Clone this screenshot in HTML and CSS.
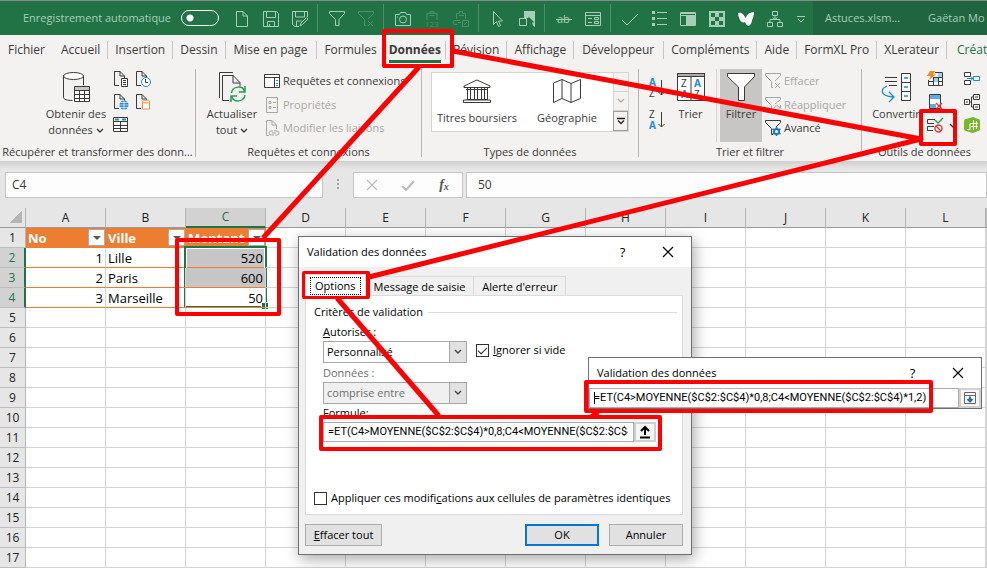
FILE: index.html
```html
<!DOCTYPE html>
<html lang="fr">
<head>
    <meta charset="UTF-8">
    <meta name="viewport" content="width=device-width, initial-scale=1.0">
    <title>Astuces.xlsm - Excel</title>
    <link rel="stylesheet" href="styles.css">
</head>
<body>
    <svg class="defs" aria-hidden="true">
        <symbol id="doc" viewBox="0 0 16 16"><path d="M1.500 14.500V.5H7l4.500 4.500V7M7 .5V5h4.500M1.500 14.500H6" fill="none" stroke="#3b3a39"/></symbol>
        <symbol id="funnel" viewBox="0 0 16 16"><path d="M.5 .5h15v2L10 8.500v6H6.500v-6L.5 2.500z" fill="none" stroke="currentColor"/></symbol>
        <symbol id="chevron" viewBox="0 0 8 6"><path d="M1 1l3 3 3-3" fill="none" stroke="currentColor" stroke-width="1.400"/></symbol>
        <symbol id="close" viewBox="0 0 12 12"><path d="M1 1l10 10M11 1L1 11" fill="none" stroke="currentColor" stroke-width="1.200"/></symbol>
    </svg>

    <header class="titlebar">
        <label class="autosave" for="autosave">Enregistrement automatique</label>
        <input type="checkbox" id="autosave" class="toggle">
        <div class="quick">
            <button aria-label="Nouveau"><svg viewBox="0 0 16 16"><path d="M2.500 .5H9l4.500 4.500v10.500h-11zM9 .5V5h4.500"/></svg></button>
            <button aria-label="Enregistrer"><svg viewBox="0 0 16 16"><path d="M.5 .5h13l2 2v13H.5zM3.500 .5v6h9v-6M4.500 15.500v-5h7v5M6.500 13v2.500"/></svg></button>
            <button aria-label="Enregistrer sous"><svg viewBox="0 0 16 16"><path d="M7 15.500H3l-2.500-2V.5h15V6M3.500 .5v5.500h9v-5.500M4.500 15v-5h5M8 15l1-3 5.500-5.500 1.500 1.500-5.500 5.500z"/></svg></button>
            <span class="qsep"></span>
            <button aria-label="Filtrer"><svg><use href="#funnel"/></svg></button>
            <button aria-label="Effacer le filtre" class="off"><svg viewBox="0 0 16 16"><path d="M.5 .5h15v2L10 8M6.500 14.500V8.500L.5 2.500v-2M6.500 14.500H8M10 10l5 5M15 10l-5 5"/></svg></button>
            <span class="qsep"></span>
            <button aria-label="Appareil photo"><svg viewBox="0 0 16 16"><path d="M.5 3.500h4l1-2h5l1 2h4v11H.5z"/><circle cx="8" cy="8.500" r="3.500"/><path d="M2 6h1"/></svg></button>
            <button aria-label="Coller les valeurs" class="off"><svg viewBox="0 0 16 16"><path d="M3 9V2.500h3v-2h4v2h3V9M5.500 4.500h5M6 2.500h4"/><text x="1" y="16">123</text></svg></button>
            <button aria-label="Coller avec liaison" class="off"><svg viewBox="0 0 16 16"><path d="M3.500 8V2.500h3v-2h3v2h3V8M6 4.500h5M7 9.500H2a2 2 0 0 0 0 4h2M5 11.500h3M9.500 9.500h6v6h-6zM11 14l3-3"/></svg></button>
            <span class="qsep"></span>
            <button aria-label="Sélectionner"><svg viewBox="0 0 16 16"><path d="M3.500 .5v13l3-3 2 5 2-1-2-4.500h4z"/></svg></button>
            <button aria-label="Sélectionner les objets"><svg viewBox="0 0 16 16"><path d="M.5 7.500h7v7h-7z"/><path class="solid" d="M5 0h11v16l-6-4V7H5z"/><path class="cut" d="M9.500 5.500v9l2-2 1.500 3 1-1-1-3h2.500z"/></svg></button>
            <span class="qsep"></span>
            <button aria-label="Barré"><svg viewBox="0 0 16 16"><text class="ab" x="1" y="12">ab</text><path d="M0 8.500h16"/></svg></button>
            <button aria-label="Formulaire"><svg viewBox="0 0 16 16"><path d="M.5 1.500h15v13H.5zM.5 4.500h15M3 7.500h4M3 11.500h4M9.500 6.500h4v2h-4zM9.500 10.500h4v2h-4z"/></svg></button>
            <span class="qsep"></span>
            <button aria-label="Valider"><svg viewBox="0 0 16 16"><path d="M0 9l5 5L16 3"/></svg></button>
            <button aria-label="Liste"><svg viewBox="0 0 16 16"><path class="solid" d="M1 0h3v3H1zM1 6h3v3H1zM1 12h3v3H1z"/><path d="M6 1.500h10M6 7.500h10M6 13.500h10"/></svg></button>
            <button aria-label="Volets"><svg viewBox="0 0 16 16"><path d="M.5 1.500h15v13H.5zM.5 4.500h15"/><path class="solid" d="M6 4h9v10H6zM1 2h14v1H1z"/></svg></button>
            <button aria-label="Damier"><svg viewBox="0 0 16 16"><path class="solid" d="M0 0h16v16H0z"/><path class="cut" d="M2 2h4v4H2zM10 2h4v4h-4zM6 6h4v4H6zM2 10h4v4H2zM10 10h4v4h-4z"/></svg></button>
            <button aria-label="Papillon"><svg viewBox="0 0 16 16"><path class="wing" d="M0 2c4-1 6 2 7.500 5C9 3 12 1 16 1c0 4-1 6-2 8 0 3-2 5-3 6-2 0-3-2-4-4-2 1-4 0-5-2C1 7 0 4 0 2z"/></svg></button>
            <button aria-label="Organigramme"><svg viewBox="0 0 16 16"><path d="M5.500 .5h5v4h-5zM.5 11.500h5v4h-5zM10.500 11.500h5v4h-5zM8 4.500v4M3 11V8.500h10V11M5.500 6.500l2.500 2 2.500-2"/></svg></button>
            <button aria-label="Personnaliser" class="more"><svg viewBox="0 0 8 8"><path d="M0 1.500h8M1 4l3 3 3-3"/></svg></button>
        </div>
        <div class="docinfo"><span>Astuces.xlsm...</span><span>Gaëtan Mo</span></div>
    </header>

    <nav class="tabs">
        <a href="#" class="file">Fichier</a>
        <a href="#">Accueil</a>
        <a href="#">Insertion</a>
        <a href="#">Dessin</a>
        <a href="#" class="long">Mise en page</a>
        <a href="#">Formules</a>
        <a href="#" class="active">Données</a>
        <a href="#">Révision</a>
        <a href="#">Affichage</a>
        <a href="#" class="long">Développeur</a>
        <a href="#">Compléments</a>
        <a href="#">Aide</a>
        <a href="#">FormXL Pro</a>
        <a href="#">XLerateur</a>
        <a href="#" class="context">Créat</a>
    </nav>

    <div class="ribbon">
        <section class="group get">
            <div class="tools">
                <button class="big">
                    <svg viewBox="0 0 28 32"><path d="M1.500 4.500v22c0 2 4 3 9 3M21.500 4.500V14" fill="none" stroke="#3b3a39"/><ellipse cx="11.500" cy="5" rx="10" ry="3.500" fill="#fff" stroke="#3b3a39"/><path d="M12.500 15.500h15v15h-15z" fill="#fff" stroke="#3b3a39"/><path d="M13 16h14v3H13z" fill="#c8c6c4"/><path d="M12.500 19.500h15M12.500 23.500h15M12.500 27.500h15M17.500 19v12M22.500 19v12" fill="none" stroke="#3b3a39"/></svg>
                    <span>Obtenir des<br>données <svg class="caret"><use href="#chevron"/></svg></span>
                </button>
                <div class="icons">
                    <button aria-label="Fichier texte"><svg viewBox="0 0 16 16"><use href="#doc"/><path d="M8.500 7.500h6v8h-6zM10 9.500h3M10 11.500h3M10 13.500h3" fill="#fff" stroke="#3b3a39"/></svg></button>
                    <button aria-label="Sources récentes"><svg viewBox="0 0 16 16"><use href="#doc"/><circle cx="11" cy="11" r="4.500" fill="#fff" stroke="#1e8bcd"/><path d="M10.500 8v3.500H13" fill="none" stroke="#3b3a39"/></svg></button>
                    <button aria-label="À partir du web"><svg viewBox="0 0 16 16"><use href="#doc"/><circle cx="11" cy="11" r="4.500" fill="#1e8bcd"/><path d="M6 11h10M11 6v10M7 8.500h8M7 13.500h8" fill="none" stroke="#fff" stroke-width=".7"/></svg></button>
                    <button aria-label="Connexions existantes"><svg viewBox="0 0 16 16"><use href="#doc"/><path d="M7.500 7.500v7.500h7V7.500" fill="#fff" stroke="#f7893c"/><ellipse cx="11" cy="7.500" rx="3.500" ry="1.500" fill="#fff" stroke="#f7893c"/></svg></button>
                    <button aria-label="À partir d'un tableau"><svg viewBox="0 0 16 16"><path d="M.5 .5h14v14H.5zM.5 4.500h14M.5 8.500h14M.5 11.500h14M7.500 4v11" fill="#fff" stroke="#3b3a39"/><path d="M2 2.500h4M9 2.500h4" stroke="#1e8bcd" stroke-width="2"/></svg></button>
                </div>
            </div>
            <h2>Récupérer et transformer des donn...</h2>
        </section>

        <section class="group queries">
            <div class="tools">
                <button class="big">
                    <svg viewBox="0 0 28 32"><path d="M1.500 27V1.500H15M4.500 29.500V4.500H15l7 7V15M15 4v8h7M4.500 29.500H11" fill="none" stroke="#3b3a39"/><path d="M13.500 22c1-7 11-8 13-2M27 15v6h-6M27 24c-1 7-11 8-13 2M13 31v-6h6" fill="none" stroke="#22a04d" stroke-width="1.500"/></svg>
                    <span>Actualiser<br>tout <svg class="caret"><use href="#chevron"/></svg></span>
                </button>
                <div class="list">
                    <button><svg viewBox="0 0 16 16"><path d="M.5 1.500h15v13H.5zM.5 4.500h15M10.500 4.500v10" fill="#fff" stroke="#3b3a39"/><path d="M12 7.500h2M12 10.500h2M12 12.500h2" stroke="#1e8bcd"/></svg>Requêtes et connexions</button>
                    <button disabled><svg viewBox="0 0 16 16"><path d="M2.500 .5h11v15h-11zM5 4.500h2v2H5zM5 9.500h2v2H5zM9 5.500h3M9 10.500h3" fill="none" stroke="#a8a6a4"/></svg>Propriétés</button>
                    <button disabled><svg viewBox="0 0 16 16"><path d="M2.500 15.500V.5H8l4.500 4.500v4M8 .5V5h4.500M2.500 15.500H5M9 11H7a2 2 0 0 0 0 4h3M11 15h2a2 2 0 0 0 0-4h-3M8 13h4" fill="none" stroke="#a8a6a4"/></svg>Modifier les liaisons</button>
                </div>
            </div>
            <h2>Requêtes et connexions</h2>
        </section>

        <section class="group types">
            <div class="tools">
                <div class="gallery">
                    <button><svg viewBox="0 0 28 28"><path d="M1 9.500V8L14 2l13 6v1.500zM3 11.500h22M3.500 21.500h21M.5 24.500h27v-2.500H.5zM4.500 10v12M7.500 10v12M11.500 10v12M14.500 10v12M18.500 10v12M21.500 10v12M24.500 10v12" fill="none" stroke="#3b3a39"/></svg>Titres boursiers</button>
                    <button><svg viewBox="0 0 28 28"><path d="M.5 5L9 1.500l9 4 9.500-4v19L18 24.500l-9-4-8.500 4zM9 1.500v19M18 5.500v19" fill="none" stroke="#3b3a39"/></svg>Géographie</button>
                    <div class="scroll">
                        <button disabled aria-label="Haut"><svg class="up"><use href="#chevron"/></svg></button>
                        <button disabled aria-label="Bas"><svg><use href="#chevron"/></svg></button>
                        <button aria-label="Autres"><svg viewBox="0 0 8 6"><path d="M0 .5h8M1 2.500l3 3 3-3" fill="none" stroke="#222" stroke-width="1.300"/></svg></button>
                    </div>
                </div>
            </div>
            <h2>Types de données</h2>
        </section>

        <section class="group sort">
            <div class="tools">
                <div class="az">
                    <button aria-label="Trier de A à Z"><svg viewBox="0 0 16 20"><text x="0" y="8" class="blue">A</text><text x="0" y="19">Z</text><path d="M12.500 2v15M9.500 14l3 3 3-3"/></svg></button>
                    <button aria-label="Trier de Z à A"><svg viewBox="0 0 16 20"><text x="0" y="8">Z</text><text x="0" y="19" class="blue">A</text><path d="M12.500 2v15M9.500 14l3 3 3-3"/></svg></button>
                </div>
                <button class="big sorter">
                    <svg viewBox="0 0 28 32"><path d="M.5 2.500h27v27H.5zM14 5v24" fill="#fff" stroke="#3b3a39"/><path d="M.5 2.500h27v3H.5z" fill="#b0aeac" stroke="#3b3a39"/><text x="4" y="16">Z</text><text x="4" y="27" class="blue">A</text><text x="17" y="16" class="blue">A</text><text x="17" y="27">Z</text></svg>
                    <span>Trier</span>
                </button>
                <button class="big filter">
                    <svg viewBox="0 0 28 32"><path d="M.5 2.500h27v3L17.500 16v13.500h-6V16L.5 5.500z" fill="#fff" stroke="#3b3a39"/></svg>
                    <span>Filtrer</span>
                </button>
                <div class="list">
                    <button disabled><svg viewBox="0 0 16 16"><path d="M.5 .5h15v2L10 8M6.500 14.500V8.500L.5 2.500v-2M6.500 14.500H8M10 10l5 5M15 10l-5 5" fill="none" stroke="#a8a6a4"/></svg>Effacer</button>
                    <button disabled><svg viewBox="0 0 16 16"><path d="M.5 .5h15v2L10 7M6.500 14.500V8.500L.5 2.500v-2M6.500 14.500H8M9 11c1-3 5-3 6 0M15.500 8v3h-3M15 13c-1 3-5 3-6 1" fill="none" stroke="#a8a6a4"/></svg>Réappliquer</button>
                    <button><svg viewBox="0 0 16 16"><path d="M.5 .5h15v2L11 7M6.500 14.500V8.500L.5 2.500v-2M6.500 14.500H8" fill="none" stroke="#3b3a39"/><circle cx="11.500" cy="11.500" r="2.500" fill="#fff" stroke="#1e78c2" stroke-width="2"/><path d="M11.500 7v2M11.500 14v2M7.500 9l2 1M13.500 13l2 1M15.500 9l-2 1M9.500 13l-2 1" stroke="#1e78c2" stroke-width="1.500"/></svg>Avancé</button>
                </div>
            </div>
            <h2>Trier et filtrer</h2>
        </section>

        <section class="group data">
            <div class="tools">
                <button class="big">
                    <svg class="wide" viewBox="0 0 32 32"><path d="M5 6.500h12M5 10.500h12M9 14.500h8" stroke="#3b3a39"/><path d="M21.500 2.500h9v27h-9zM21.500 11.500h9M21.500 20.500h9" fill="#fff" stroke="#3b3a39"/><path d="M24 7h4M24 16h4M24 25h4M7 15c-7 3-7 10 6 11M9 21l5 5-5 5" fill="none" stroke="#1e8bcd" stroke-width="1.300"/></svg>
                    <span>Convertir</span>
                </button>
                <div class="icons">
                    <button aria-label="Remplissage instantané"><svg viewBox="0 0 16 16"><path d="M1.500 9v5.500h14V1.500H8M1 10.500h14M6 6.500h9M6.500 6v8M11.500 2v12" fill="none" stroke="#3b3a39"/><path d="M7 7h4v4H7zM11 2h4v4h-4z" fill="#9fd0f1"/><path d="M3 0h5L6 3.500h3L2 9l1.500-4H0z" fill="#f08a24"/></svg></button>
                    <button aria-label="Consolider"><svg viewBox="0 0 16 16"><path d="M.5 1.500h6v4h-6zM.5 9.500h6v4h-6z" fill="#fff" stroke="#3b3a39"/><path d="M9.500 5.500h6v4h-6zM3 7.500h6M6 5l3 2.500L6 10" fill="none" stroke="#1e8bcd"/></svg></button>
                    <button aria-label="Supprimer les doublons"><svg viewBox="0 0 16 16"><path d="M2.500 .5h11v14h-11z" fill="#fff" stroke="#3b3a39"/><path d="M3 1h10v4H3zM3 10h6v4H3z" fill="#5aaee6"/><path d="M9 9l6 6M15 9l-6 6" stroke="#e03c3c" stroke-width="1.500"/></svg></button>
                    <button aria-label="Relations"><svg viewBox="0 0 16 16"><path d="M.5 5.500h5v5h-5zM9.500 .5h6v5h-6zM9.500 10.500h6v5h-6zM5.500 8h2M7.500 3v10M7.500 3h2M7.500 13h2M2 8h2M11 3h3M11 13h3" fill="none" stroke="#3b3a39"/></svg></button>
                    <button aria-label="Validation des données" class="split"><svg viewBox="0 0 16 16"><path d="M8 2.500H.5v4H7M7 9.500H.5v4H6" fill="none" stroke="#3b3a39"/><path d="M8 3l3 3 5-5" fill="none" stroke="#22a04d" stroke-width="1.400"/><circle cx="11.500" cy="11.500" r="3.500" fill="#fff" stroke="#e03c3c" stroke-width="1.400"/><path d="M9 9l5 5" stroke="#e03c3c" stroke-width="1.400"/></svg><svg class="caret"><use href="#chevron"/></svg></button>
                    <button aria-label="Modèle de données"><svg viewBox="0 0 16 16"><path d="M0 4q0-2 2-2l7-2 5 2q2 0 2 2v8q0 2-2 2l-5 2-7-2q-2 0-2-2z" fill="#77b82a"/><path d="M3 12.500h3V6.500h3M9.500 3v10M12.500 4v8M7 9.500h7M10 6.500h4" fill="none" stroke="#fff"/></svg></button>
                </div>
            </div>
            <h2>Outils de données</h2>
        </section>
    </div>

    <div class="formulabar">
        <input class="namebox" type="text" value="C4" aria-label="Zone Nom">
        <span class="dots"></span>
        <div class="fx">
            <button aria-label="Annuler"><svg><use href="#close"/></svg></button>
            <button aria-label="Entrer"><svg viewBox="0 0 12 12"><path d="M0 7l4 4 8-9" fill="none" stroke="currentColor" stroke-width="2"/></svg></button>
            <button aria-label="Insérer une fonction" class="fn"><i>f</i><small>x</small></button>
        </div>
        <input class="formula" type="text" value="50" aria-label="Barre de formule">
    </div>

    <main class="sheet">
        <table class="grid">
            <thead><tr id="letters"><th class="corner"></th></tr></thead>
            <tbody id="rows"></tbody>
        </table>
    </main>

    <div class="dialog main-dialog" role="dialog" aria-labelledby="dlg1">
        <div class="caption">
            <span id="dlg1">Validation des données</span>
            <button aria-label="Aide">?</button>
            <button aria-label="Fermer"><svg><use href="#close"/></svg></button>
        </div>
        <div class="dialog-body">
            <div class="dialog-tabs">
                <button class="current"><span>Options</span></button>
                <button>Message de saisie</button>
                <button>Alerte d'erreur</button>
            </div>
            <div class="panel">
                <div class="legend">Critères de validation</div>
                <div class="fields">
                    <label for="allow"><u>A</u>utoriser :</label>
                    <div class="row">
                        <div class="combo">
                            <select id="allow"><option>Personnalisé</option></select>
                            <svg><use href="#chevron"/></svg>
                        </div>
                        <label class="check"><input type="checkbox" checked><span><u>I</u>gnorer si vide</span></label>
                    </div>
                    <label for="op" class="dim">Données :</label>
                    <div class="combo">
                        <select id="op" disabled><option>comprise entre</option></select>
                        <svg><use href="#chevron"/></svg>
                    </div>
                    <label for="f1"><u>F</u>ormule:</label>
                    <div class="ref">
                        <input id="f1" type="text" value="=ET(C4&gt;MOYENNE($C$2:$C$4)*0,8;C4&lt;MOYENNE($C$2:$C$4)*1,2)">
                        <button aria-label="Réduire"><svg viewBox="0 0 12 12"><path d="M6 1v8M2 5l4-4 4 4M1 11.500h10" fill="none" stroke="#000" stroke-width="2"/></svg></button>
                    </div>
                </div>
                <label class="check apply"><input type="checkbox"><span>Appliquer ces modifi<u>c</u>ations aux cellules de paramètres identiques</span></label>
            </div>
            <div class="actions">
                <button class="clear"><u>E</u>ffacer tout</button>
                <button class="ok">OK</button>
                <button>Annuler</button>
            </div>
        </div>
    </div>

    <div class="dialog mini-dialog" role="dialog" aria-labelledby="dlg2">
        <div class="caption">
            <span id="dlg2">Validation des données</span>
            <button aria-label="Aide">?</button>
            <button aria-label="Fermer"><svg><use href="#close"/></svg></button>
        </div>
        <div class="ref">
            <input type="text" class="editing" aria-label="Formule" value="=ET(C4&gt;MOYENNE($C$2:$C$4)*0,8;C4&lt;MOYENNE($C$2:$C$4)*1,2)">
            <button aria-label="Agrandir"><svg viewBox="0 0 12 12"><path d="M.5 .5h11v11H.5zM.5 3.500h11" fill="#fff" stroke="#666"/><path d="M6 4.500V9M3.500 7L6 9.500 8.500 7" fill="none" stroke="#2672b8" stroke-width="2"/></svg></button>
        </div>
    </div>

    <svg class="marks" viewBox="0 0 987 568" aria-hidden="true">
        <path class="box" d="M384 31h68v35h-68zM921 111h34v33h-34zM177 240h102v74H177zM304 273h64v24h-64zM321 417h339v32H321zM586 382h345v29H586z"/>
        <path class="line" d="M419 67L263 238M453 51L921 139L369 277M337 298L439 416M598 412L591 417"/>
    </svg>

    <script>
        const letters = 'ABCDEFGHIJKLM'.split('');
        const data = {
            1: ['No', 'Ville', 'Montant'],
            2: [1, 'Lille', 520],
            3: [2, 'Paris', 600],
            4: [3, 'Marseille', 50]
        };
        const head = document.getElementById('letters');
        letters.forEach(l => {
            head.innerHTML += `<th class="${l === 'C' ? 'on' : ''}">${l === 'M' ? '' : l}</th>`;
        });

        let html = '';
        for (let r = 1; r <= 17; r++) {
            html += `<tr><th class="${r > 1 && r < 5 ? 'on' : ''}">${r}</th>`;
            letters.forEach((l, c) => {
                const value = data[r] ? data[r][c] : undefined;
                if (value === undefined) {
                    html += '<td></td>';
                } else if (r === 1) {
                    html += `<td class="head"><div>${value}<button aria-label="Filtrer ${value}"></button></div></td>`;
                } else {
                    const cls = (c === 1 ? 'text' : 'num') + (c === 2 && r < 4 ? ' picked' : '');
                    const frame = c === 2 && r === 2 ? '<span class="selection"></span>' : '';
                    html += `<td class="cell ${cls}">${value}${frame}</td>`;
                }
            });
            html += '</tr>';
        }
        document.getElementById('rows').innerHTML = html;
    </script>
</body>
</html>
```
FILE: styles.css
```css
:root {
    --green: #217346;
    --ribbon: #f3f2f1;
    --ink: #3b3a39;
    --line: #d4d4d4;
    --orange: #ed7d31;
}
* {
    box-sizing: border-box;
}
body {
    margin: 0;
    position: relative;
    min-height: 100vh;
    overflow: hidden;
    font-family: "Open Sans", "Noto Sans", sans-serif;
    font-size: 11px;
    line-height: 16px;
    color: var(--ink);
    background: #fff;
}
button, input, select {
    font: inherit;
    color: inherit;
    margin: 0;
    padding: 0;
    border: 0;
    border-radius: 0;
    background: none;
}
button {
    display: flex;
    align-items: center;
    justify-content: center;
    white-space: nowrap;
}
svg {
    width: 16px;
    height: 16px;
    flex: none;
    overflow: visible;
}
.defs {
    display: none;
}

/* title bar */
.titlebar {
    display: flex;
    align-items: center;
    height: 35px;
    padding-left: 23px;
    border-top: 1px solid #888;
    background: var(--green);
    color: #a6cfb6;
    white-space: nowrap;
}
.autosave {
    width: 158px;
}
.toggle {
    appearance: none;
    flex: none;
    width: 38px;
    height: 16px;
    border: 1px solid #fff;
    border-radius: 8px;
    background: radial-gradient(circle at 8px 7px, #fff 3px, transparent 4px);
}
.quick {
    display: flex;
    padding: 2px 0 0 8px;
}
.quick button {
    width: 29px;
    height: 32px;
}
.quick svg {
    fill: none;
    stroke: currentColor;
}
.quick .off {
    color: #4c9069;
}
.quick .solid {
    fill: currentColor;
    stroke: none;
}
.quick .cut {
    fill: var(--green);
    stroke: none;
}
.quick .wing {
    fill: #fff;
    stroke: none;
}
.quick text {
    fill: currentColor;
    stroke: none;
    font-size: 8px;
}
.quick .ab {
    font-size: 11px;
}
.quick .more {
    width: 24px;
}
.quick .more svg {
    width: 8px;
    height: 8px;
}
.qsep {
    width: 1px;
    height: 28px;
    margin: 1px 4px 0 3px;
    background: #4d9069;
}
.docinfo {
    flex: 1;
    display: flex;
    align-items: center;
    align-self: stretch;
    gap: 28px;
    padding-left: 12px;
    overflow: hidden;
    background: #1f6640;
}

/* tabs */
.tabs {
    display: flex;
    height: 31px;
    padding-top: 6px;
    background: var(--ribbon);
    overflow: hidden;
}
.tabs a {
    flex: none;
    height: 18px;
    padding: 0 7px;
    border-left: 1px solid #c8c6c4;
    color: var(--ink);
    font-size: 12px;
    line-height: 18px;
    text-decoration: none;
}
.tabs .file {
    padding: 0 8px;
    border-left: 0;
}
.tabs .file + a {
    border-left: 0;
    padding-left: 8px;
}
.tabs .long {
    padding: 0 9px 0 8px;
}
.tabs .active {
    height: 22px;
    font-weight: bold;
    padding: 0 4px;
    border-left-color: transparent;
}
.tabs .active::after {
    content: "";
    display: block;
    height: 3px;
    margin-top: 1px;
    background: var(--green);
}
.tabs .context {
    padding-left: 10px;
    color: var(--green);
}

/* ribbon */
.ribbon {
    display: flex;
    height: 95px;
    padding-top: 2px;
    background: var(--ribbon);
    overflow: hidden;
}
.group {
    flex: none;
    display: flex;
    flex-direction: column;
    margin: 1px 0 4px;
    border-right: 1px solid #b8b6b4;
}
.group h2 {
    margin: auto 0 0;
    font-size: 11px;
    font-weight: normal;
    line-height: 10px;
    text-align: center;
    white-space: nowrap;
}
.tools {
    display: flex;
    height: 73px;
}
.get { width: 196px; }
.queries { width: 226px; }
.types { width: 217px; }
.sort { width: 223px; }
.data { flex: 1; border-right: 0; }

.big {
    flex-direction: column;
    justify-content: flex-start;
    padding-top: 2px;
}
.big > svg {
    width: 28px;
    height: 32px;
    margin-bottom: 3px;
}
.big .wide {
    width: 32px;
}
.caret {
    width: 8px;
    height: 6px;
}
.get .big { width: 66px; margin-left: 43px; }
.queries .big { width: 60px; margin-left: 6px; }
.data .big { width: 54px; margin-left: 7px; }
.icons {
    display: grid;
    grid-template-columns: 22px 22px;
    grid-auto-rows: 23px;
    padding: 2px 0 0 4px;
}
.icons button {
    align-items: flex-start;
    justify-content: flex-start;
}
.icons .split {
    gap: 6px;
}
.split .caret {
    margin-top: 6px;
}
.data .icons {
    grid-template-columns: 37px 22px;
}
.list {
    display: flex;
    flex-direction: column;
    align-items: flex-start;
    padding-top: 2px;
}
.queries .list {
    padding-left: 2px;
}
.list button {
    height: 24px;
    gap: 3px;
    padding-bottom: 4px;
}
.list button:disabled {
    color: #a8a6a4;
}
.gallery {
    display: flex;
    height: 60px;
    margin: 3px 0 0 9px;
    border: 1px solid var(--line);
    background: #fff;
}
.gallery > button {
    flex-direction: column;
    width: 90px;
}
.gallery > button > svg {
    width: 28px;
    height: 28px;
    margin-bottom: 4px;
}
.scroll {
    width: 15px;
    margin-left: 1px;
}
.scroll button {
    width: 15px;
    height: 19px;
    border-left: 1px solid var(--line);
    border-bottom: 1px solid var(--line);
    color: #b0aeac;
    background: var(--ribbon);
}
.scroll button:last-child {
    height: 20px;
    border: 1px solid #a19f9d;
}
.scroll svg {
    width: 8px;
    height: 6px;
}
.up {
    transform: rotate(180deg);
}
.sort text {
    font-size: 10px;
    fill: var(--ink);
}
.sort .blue {
    fill: #1e8bcd;
    font-weight: bold;
}
.az {
    padding: 9px 0 0 10px;
}
.az svg {
    width: 16px;
    height: 20px;
}
.az button {
    margin-bottom: 12px;
}
.az path {
    fill: none;
    stroke: var(--ink);
}
.sorter {
    width: 52px;
    margin-right: 3px;
    border-right: 1px solid var(--line);
}
.filter {
    width: 42px;
    background: #c8c6c4;
}
.sort .list {
    padding-left: 3px;
}

/* formula bar */
.formulabar {
    display: flex;
    align-items: center;
    height: 47px;
    padding-left: 5px;
    background: linear-gradient(#cfcfcf, #e6e6e6 8px);
    font-size: 12px;
}
.formulabar input {
    height: 26px;
    border: 1px solid #c6c6c6;
    background: #fdfdfd;
}
.namebox {
    width: 318px;
    padding-left: 6px;
}
.dots {
    width: 2px;
    height: 11px;
    margin: 0 14px;
    background: repeating-linear-gradient(#a6a6a6 0 2px, transparent 2px 4px);
}
.fx {
    display: flex;
    width: 110px;
    height: 26px;
    margin-right: 3px;
    border: 1px solid #c6c6c6;
    background: #fdfdfd;
    color: #bbb;
}
.fx button {
    width: 36px;
}
.fx svg {
    width: 12px;
    height: 12px;
}
.fx .fn {
    color: #555;
    font: bold 14px "Liberation Serif", serif;
}
.fn small {
    font-size: 10px;
    font-style: italic;
    padding-top: 3px;
}
.formula {
    flex: 1;
    min-width: 0;
    padding-left: 11px;
}

/* grid */
.grid {
    width: 100%;
    table-layout: fixed;
    border-spacing: 0;
    color: #000;
}
.grid th {
    width: 80px;
    height: 20px;
    padding: 0;
    border-right: 1px solid #b5b5b5;
    border-bottom: 1px solid #9b9b9b;
    background: #e6e6e6;
    color: #222;
    font-size: 12px;
    font-weight: normal;
    line-height: 18px;
}
.grid th:last-child {
    width: auto;
}
.grid .corner {
    width: 26px;
    background: linear-gradient(135deg, transparent 50%, #b5b5b5 50%) 10px 3px / 12px 12px no-repeat #e6e6e6;
}
.grid thead .on {
    background: #d2d2d2;
    border-bottom: 2px solid var(--green);
    color: var(--green);
}
.grid tbody th {
    width: 26px;
    border-bottom-color: #bdbdbd;
    font-size: 12px;
}
.grid tbody .on {
    background: #d2d2d2;
    border-right: 2px solid var(--green);
    color: var(--green);
}
.grid td {
    position: relative;
    height: 20px;
    padding: 0 2px;
    border-right: 1px solid var(--line);
    border-bottom: 1px solid var(--line);
    font-size: 13px;
    line-height: 18px;
}
.grid .cell {
    border-bottom-color: var(--orange);
}
.grid .num {
    text-align: right;
}
.grid .picked {
    background: #c6c6c6;
}
.grid .head {
    padding: 0 0 0 2px;
    border-color: var(--orange);
    background: var(--orange);
    color: #fff;
    font-weight: bold;
}
.head div {
    display: flex;
    justify-content: space-between;
    align-items: center;
    height: 19px;
}
.head button {
    width: 17px;
    height: 17px;
    border: 1px solid #ababab;
    background: #fff;
}
.head button::after {
    content: "";
    border: 4px solid transparent;
    border-top-color: #555;
    border-bottom: 0;
}
.selection {
    position: absolute;
    top: -2px;
    left: -2px;
    right: -2px;
    height: 62px;
    border: 2px solid var(--green);
    box-shadow: inset 0 0 0 1px #fff;
}
.selection::after {
    content: "";
    position: absolute;
    right: -3px;
    bottom: -3px;
    width: 6px;
    height: 6px;
    border: 1px solid #fff;
    border-width: 1px 0 0 1px;
    background: var(--green);
}

/* dialogs */
.dialog {
    position: absolute;
    width: 394px;
    border: 1px solid #6e6e6e;
    background: #f0f0f0;
    box-shadow: 2px 4px 14px rgba(0, 0, 0, 0.35);
    color: #000;
}
.main-dialog {
    top: 236px;
    left: 298px;
}
.mini-dialog {
    top: 357px;
    left: 588px;
    box-shadow: none;
}
.caption {
    display: flex;
    align-items: center;
    height: 30px;
    padding: 0 1px 0 8px;
    background: #fff;
}
.caption span {
    flex: 1;
}
.caption button {
    width: 45px;
    font-size: 13px;
}
.caption svg {
    width: 12px;
    height: 12px;
}
.dialog-body {
    padding: 8px 8px 8px 6px;
}
.dialog-tabs {
    display: flex;
    align-items: flex-end;
    height: 20px;
}
.dialog-tabs button {
    height: 19px;
    padding: 2px 8px 0;
    border: 1px solid #d9d9d9;
    border-width: 1px 1px 0 0;
}
.dialog-tabs .current {
    height: 22px;
    margin-bottom: -1px;
    padding: 0 4px;
    border-left-width: 1px;
    background: #fff;
    z-index: 1;
}
.dialog-tabs .current span {
    padding: 0 4px;
    border: 1px dotted #000;
}
.panel {
    height: 220px;
    padding: 8px 5px 0 8px;
    border: 1px solid #dcdcdc;
    background: #fff;
}
.legend {
    display: flex;
    align-items: center;
    gap: 5px;
}
.legend::after {
    content: "";
    flex: 1;
    height: 1px;
    background: #dcdcdc;
}
.fields {
    padding: 4px 0 0 9px;
}
.fields > label {
    display: block;
    height: 17px;
}
.fields .dim {
    color: #6d6d6d;
    height: 19px;
    padding-top: 2px;
}
.row {
    display: flex;
    gap: 9px;
}
.combo {
    position: relative;
    width: 144px;
    height: 22px;
}
.combo select {
    appearance: none;
    width: 100%;
    height: 22px;
    padding-left: 3px;
    border: 1px solid #a6a6a6;
    background: linear-gradient(#e1e1e1, #e1e1e1) right / 16px 100% no-repeat #fff;
}
.combo select:disabled {
    color: #6d6d6d;
    background-color: #f0f0f0;
    opacity: 1;
}
.combo svg {
    position: absolute;
    right: 1px;
    top: 1px;
    width: 17px;
    height: 20px;
    padding: 4px;
    border-left: 1px solid #a6a6a6;
    color: #444;
}
.combo + label {
    margin-top: 1px;
}
.check {
    display: flex;
    align-items: center;
    gap: 4px;
    height: 16px;
}
.check input {
    appearance: none;
    width: 13px;
    height: 13px;
    border: 1px solid #333;
    background: #fff;
}
.check input:checked::after {
    content: "";
    display: block;
    width: 8px;
    height: 4px;
    margin: 2px 1px;
    border: 1px solid #222;
    border-width: 0 0 1px 1px;
    transform: rotate(-45deg);
}
.ref {
    display: flex;
    height: 20px;
}
.ref input {
    flex: 1;
    min-width: 0;
    padding: 0 5px 0 4px;
    border: 1px solid #ababab;
    background: #fff;
    font-family: Roboto, "Open Sans", sans-serif;
}
.ref .editing {
    background: linear-gradient(#000, #000) 4px 3px / 1px 12px no-repeat #fff;
}
.ref button {
    width: 22px;
    border: 2px solid #d0d0d0;
    background: #f5f5f5;
}
.ref svg {
    width: 12px;
    height: 12px;
}
.fields .ref {
    width: 333px;
}
.apply {
    margin-top: 48px;
}
.actions {
    display: flex;
    gap: 10px;
    margin-top: 9px;
}
.actions button {
    width: 74px;
    height: 22px;
    border: 1px solid #adadad;
    background: #e1e1e1;
}
.actions .clear {
    width: 77px;
    margin-right: auto;
}
.actions .ok {
    border: 2px solid #0078d7;
}

/* red call-outs */
.marks {
    position: absolute;
    top: 0;
    left: 0;
    width: 987px;
    height: 568px;
    fill: none;
    stroke: #f00;
    stroke-linejoin: round;
    pointer-events: none;
}
.marks .box {
    stroke-width: 4;
}
.marks .line {
    stroke-width: 5;
}
```
